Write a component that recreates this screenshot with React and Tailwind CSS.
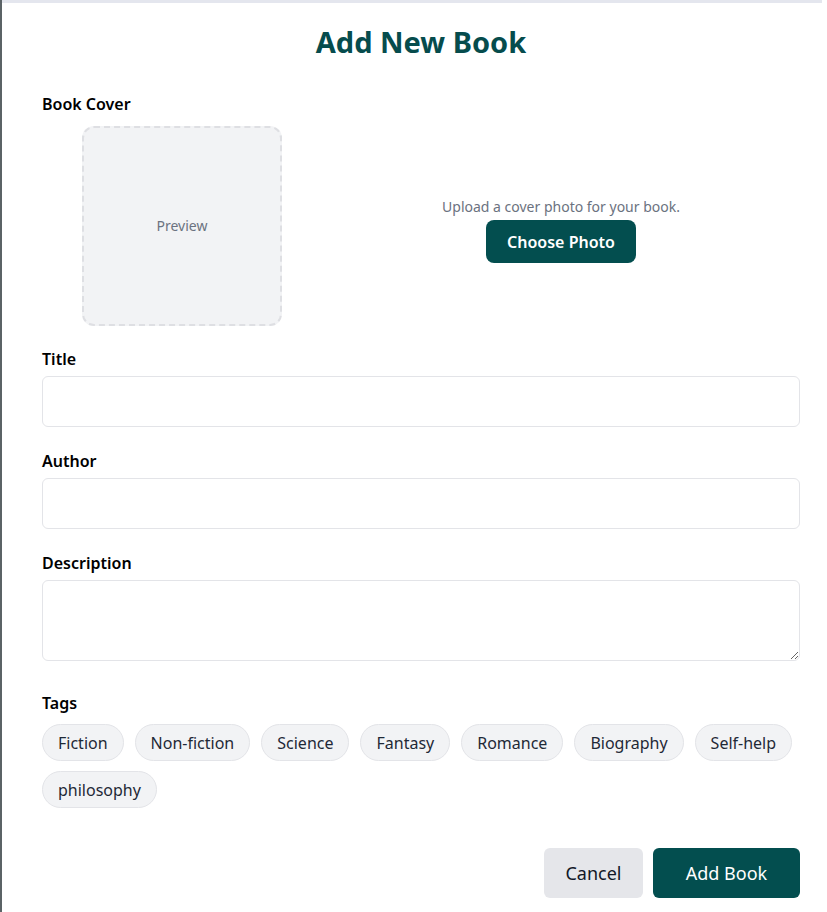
const TAGS = ["Fiction", "Non-fiction", "Science", "Fantasy", "Romance", "Biography", "Self-help", "philosophy"];

function Field({ label, children }) {
  return (
    <div className="mb-[22px]">
      <label className="block text-base leading-6 font-semibold text-black mb-[5px]">{label}</label>
      {children}
    </div>
  );
}

export default function App() {
  return (
    <div
      className="w-[827px] h-[912px] bg-white overflow-hidden flex"
      style={{ fontFamily: '"Segoe UI", "Noto Sans", sans-serif' }}
    >
      {/* left edge of the backdrop */}
      <div className="w-[2px] shrink-0 bg-[#5b6366]" />

      <div className="flex-1 flex flex-col">
        <div className="h-[3px] mr-[5px] bg-[#e4e6ee]" />

        <div className="pl-[40px] pr-[27px]">
          <h1 className="mt-[21px] text-center text-[29px] leading-9 font-bold text-[#064c4d]">Add New Book</h1>

          {/* Cover */}
          <div className="mt-[32px] mb-[21px]">
            <div className="text-base leading-6 font-semibold text-black mb-[10px]">Book Cover</div>
            <div className="flex items-center">
              <div className="ml-[40px] w-[200px] h-[200px] shrink-0 rounded-xl border-2 border-dashed border-[#dedfe3] bg-[#f2f3f5] flex items-center justify-center text-sm text-[#6b7280]">
                Preview
              </div>
              <div className="flex-1 pl-[40px] mt-2 flex flex-col items-center">
                <p className="text-sm leading-5 text-[#6b7280]">Upload a cover photo for your book.</p>
                <button className="mt-[3px] h-[43px] px-[21px] rounded-lg bg-[#034e4f] text-white text-base font-semibold">
                  Choose Photo
                </button>
              </div>
            </div>
          </div>

          <Field label="Title">
            <input className="block w-full h-[51px] rounded-md border border-[#e3e4e8] px-3 outline-none" />
          </Field>
          <Field label="Author">
            <input className="block w-full h-[51px] rounded-md border border-[#e3e4e8] px-3 outline-none" />
          </Field>
          <div className="mb-[30px]">
            <label className="block text-base leading-6 font-semibold text-black mb-[5px]">Description</label>
            <textarea className="block w-full h-[81px] rounded-md border border-[#e3e4e8] px-3 py-2 outline-none" />
          </div>

          <div>
            <div className="text-base leading-6 font-semibold text-black mb-[9px]">Tags</div>
            <div className="flex flex-wrap gap-x-[11px] gap-y-[10px]">
              {TAGS.map((t) => (
                <span
                  key={t}
                  className="h-[37px] px-[15px] rounded-full border border-[#e3e4e8] bg-[#f2f3f5] text-base text-[#1f2937] flex items-center"
                >
                  {t}
                </span>
              ))}
            </div>
          </div>

          <div className="mt-[40px] flex justify-end gap-[10px]">
            <button className="h-[50px] w-[99px] rounded-md bg-[#e5e6ea] text-lg text-[#111827]">Cancel</button>
            <button className="h-[50px] w-[147px] rounded-md bg-[#034e4f] text-lg text-white">Add Book</button>
          </div>
        </div>
      </div>
    </div>
  );
}
